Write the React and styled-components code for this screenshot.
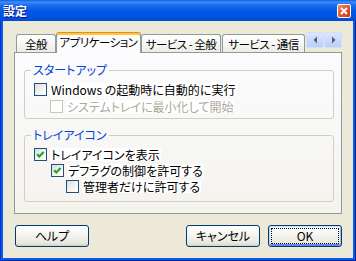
import React from 'react';
import styled, { createGlobalStyle } from 'styled-components';

const GlobalStyle = createGlobalStyle`
  html, body { margin: 0; padding: 0; background: #ffffff; }
  body {
    font-family: "Noto Sans CJK JP", "Noto Sans", sans-serif;
    font-size: 12px;
    font-feature-settings: "palt";
    -webkit-font-smoothing: none;
  }
`;

const Frame = styled.div`
  width: 356px;
  height: 261px;
  box-sizing: border-box;
  display: flex;
  flex-direction: column;
  padding: 0 3px 3px 3px;
  background: #0a5ae6;
  box-shadow: inset 1px 0 #0831d9, inset -1px 0 #001ea0, inset 0 -1px #001ea0;
`;

const TitleBar = styled.div`
  height: 21px;
  margin: 0 -3px;
  padding: 0 5px 0 3px;
  display: flex;
  align-items: flex-start;
  background: linear-gradient(180deg, #0a5fec 0%, #3c8ef6 10%, #1a6cf0 25%, #0058e8 55%, #0052e0 85%, #0049d4 100%);
`;

const Title = styled.span`
  margin-top: 4px;
  color: #ffffff;
  font-weight: bold;
  font-size: 12px;
  line-height: 14px;
  text-shadow: 1px 1px #0f1089;
`;

const CloseBox = styled.div`
  margin-left: auto;
  margin-top: 4px;
  width: 14px;
  height: 14px;
  box-sizing: border-box;
  border: 1px solid #ffffff;
  border-radius: 2px;
  background: linear-gradient(135deg, #f0936c 0%, #e25b35 45%, #c93c14 100%);
  display: flex;
  align-items: center;
  justify-content: center;
`;

const Client = styled.div`
  flex: 1;
  background: #ece9d8;
  padding: 11px 11px 0 11px;
  display: flex;
  flex-direction: column;
`;

const TabStrip = styled.div`
  height: 21px;
  display: flex;
  align-items: flex-end;
  padding-left: 2px;
  margin-bottom: -1px;
  position: relative;
  z-index: 1;
`;

const Tab = styled.div`
  width: ${p => p.$w}px;
  margin-left: ${p => p.$gap || 0}px;
  box-sizing: border-box;
  display: flex;
  align-items: center;
  justify-content: center;
  white-space: nowrap;
  font-size: 11.5px;
  letter-spacing: -0.5px;
  line-height: 14px;
  border: 1px solid #919b9c;
  border-bottom: none;
  border-radius: 3px 3px 0 0;
  ${p => p.$active ? `
    height: 21px;
    padding-bottom: 2px;
    border-top-color: #e68b2c;
    box-shadow: inset 0 2px #ffc73c;
    background: #fcfcfe;
  ` : `
    height: 18px;
    margin-bottom: 1px;
    background: linear-gradient(180deg, #ffffff 0%, #f7f7f4 50%, #ecebe6 100%);
  `}
`;

const Spin = styled.div`
  align-self: flex-start;
  margin-left: 1px;
  display: flex;
`;

const SpinButton = styled.div`
  width: 18px;
  height: 16px;
  box-sizing: border-box;
  border: 1px solid #d2defb;
  border-radius: 2px;
  background: linear-gradient(180deg, #dce6fd 0%, #c8d7fb 60%, #bccdf6 100%);
  display: flex;
  align-items: center;
  justify-content: center;
`;

const Panel = styled.div`
  height: 162px;
  box-sizing: border-box;
  border: 1px solid #919b9c;
  background: linear-gradient(180deg, #fcfcfe 0%, #f4f3ee 100%);
  padding: 10px 7px 0 9px;
`;

const Group = styled.fieldset`
  margin: ${p => p.$top || 0}px 0 0 0;
  border: 1px solid #d0d0bf;
  border-radius: 3px;
  padding: 4px 8px ${p => p.$bottom}px 9px;
  min-width: 0;
`;

const Legend = styled.legend`
  color: #0046d5;
  line-height: 14px;
  padding: 0 2px;
  margin-left: -3px;
`;

const Row = styled.div`
  height: ${p => p.$h || 17}px;
  display: flex;
  align-items: center;
  padding-left: ${p => p.$indent || 0}px;
`;

const Box = styled.span`
  width: 13px;
  height: 13px;
  box-sizing: border-box;
  flex: none;
  border: 1px solid ${p => p.$disabled ? '#cac8bb' : '#1c5180'};
  background: ${p => p.$disabled ? '#ffffff' : 'linear-gradient(135deg, #dcdcd7 0%, #f5f5f2 60%, #ffffff 100%)'};
  display: flex;
`;

const Label = styled.span`
  margin-left: 3px;
  padding: 0 1px;
  background: #ffffff;
  line-height: 13px;
  white-space: nowrap;
  color: ${p => p.$disabled ? '#aca899' : '#000000'};
`;

const ButtonRow = styled.div`
  display: flex;
  gap: 8px;
  margin-top: 11px;
  padding-left: 1px;
`;

const Button = styled.div`
  width: 74px;
  height: 22px;
  box-sizing: border-box;
  border: 1px solid #003c74;
  border-radius: 3px;
  background: linear-gradient(180deg, #ffffff 0%, #f4f4f0 45%, #e9e7df 85%, #d6d0c5 100%);
  display: flex;
  align-items: center;
  justify-content: center;
  line-height: 14px;
  position: relative;
  margin-left: ${p => p.$push ? 'auto' : '0'};
  ${p => p.$default && `
    box-shadow: inset 0 1px #cee7ff, inset 1px 0 #b7d4f7, inset -1px 0 #9dbdf3, inset 0 -2px #6982ee;
    &::after {
      content: "";
      position: absolute;
      inset: 2px;
      border: 1px dotted #000000;
    }
  `}
`;

const Check = () => (
  <svg width="11" height="11" viewBox="0 0 11 11">
    <polyline points="2.2,5.2 4.3,7.4 8.6,3" fill="none" stroke="#21a121" strokeWidth="2.1" />
  </svg>
);

const Checkbox = ({ checked, disabled, indent, h, children }) => (
  <Row $indent={indent} $h={h}>
    <Box $disabled={disabled}>{checked && <Check />}</Box>
    <Label $disabled={disabled}>{children}</Label>
  </Row>
);

const Arrow = ({ dir }) => (
  <svg width="16" height="14" viewBox="0 0 16 14">
    <polygon
      points={dir === 'left' ? '10,3.5 6.5,7 10,10.5' : '7,3.5 10.5,7 7,10.5'}
      fill="#4d6185"
    />
  </svg>
);

export default function App() {
  return (
    <>
      <GlobalStyle />
      <Frame>
        <TitleBar>
          <Title>設定</Title>
          <CloseBox>
            <svg width="8" height="8" viewBox="0 0 8 8">
              <path d="M1 1 L7 7 M7 1 L1 7" stroke="#ffffff" strokeWidth="1.8" />
            </svg>
          </CloseBox>
        </TitleBar>
        <Client>
          <TabStrip>
            <Tab $w={40}>全般</Tab>
            <Tab $w={85} $active>アプリケーション</Tab>
            <Tab $w={80}>サービス - 全般</Tab>
            <Tab $w={83} $gap={1}>サービス - 通信</Tab>
            <Spin>
              <SpinButton><Arrow dir="left" /></SpinButton>
              <SpinButton><Arrow dir="right" /></SpinButton>
            </Spin>
          </TabStrip>
          <Panel>
            <Group $bottom={3}>
              <Legend>スタートアップ</Legend>
              <Checkbox>Windows の起動時に自動的に実行</Checkbox>
              <Checkbox disabled indent={16}>システムトレイに最小化して開始</Checkbox>
            </Group>
            <Group $top={9} $bottom={6}>
              <Legend>トレイアイコン</Legend>
              <Checkbox checked>トレイアイコンを表示</Checkbox>
              <Checkbox checked indent={17} h={15}>デフラグの制御を許可する</Checkbox>
              <Checkbox indent={32} h={17}>管理者だけに許可する</Checkbox>
            </Group>
          </Panel>
          <ButtonRow>
            <Button>ヘルプ</Button>
            <Button $push>キャンセル</Button>
            <Button $default>OK</Button>
          </ButtonRow>
        </Client>
      </Frame>
    </>
  );
}
